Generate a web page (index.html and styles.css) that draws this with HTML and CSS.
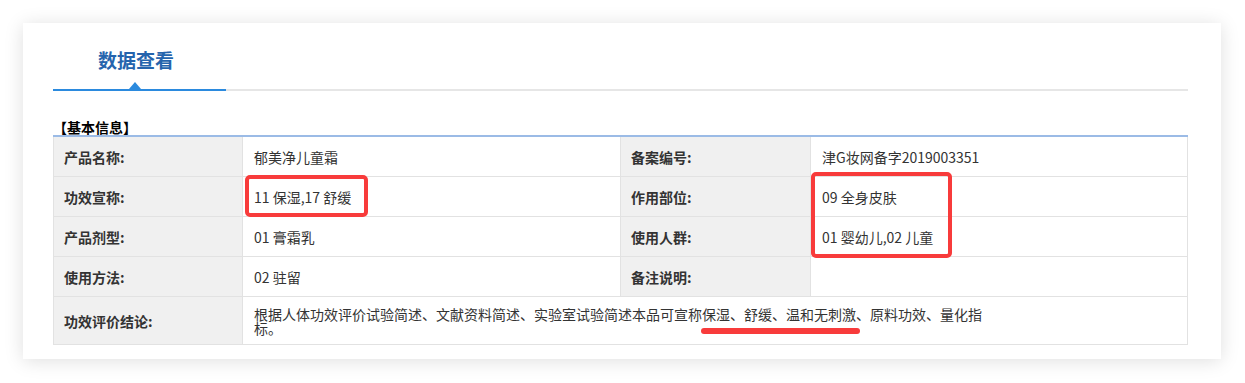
FILE: index.html
```html
<!DOCTYPE html>
<html lang="zh-CN">
<head>
<meta charset="utf-8">
<title>数据查看</title>
<link rel="stylesheet" href="styles.css">
</head>
<body>
<div class="page">
  <div class="card">
    <div class="tabs">
      <div class="tab active">数据查看</div>
      <div class="tab-rest"></div>
    </div>
    <div class="section-title">【基本信息】</div>
    <div class="grid">
      <div class="label">产品名称:</div>
      <div class="value">郁美净儿童霜</div>
      <div class="label">备案编号:</div>
      <div class="value">津G妆网备字2019003351</div>

      <div class="label">功效宣称:</div>
      <div class="value">11 保湿,17 舒缓</div>
      <div class="label">作用部位:</div>
      <div class="value">09 全身皮肤</div>

      <div class="label">产品剂型:</div>
      <div class="value">01 膏霜乳</div>
      <div class="label">使用人群:</div>
      <div class="value">01 婴幼儿,02 儿童</div>

      <div class="label">使用方法:</div>
      <div class="value">02 驻留</div>
      <div class="label">备注说明:</div>
      <div class="value"></div>

      <div class="label">功效评价结论:</div>
      <div class="value wide"><p class="long">根据人体功效评价试验简述、文献资料简述、实验室试验简述本品可宣称保湿、舒缓、温和无刺激、原料功效、量化指标。</p></div>

      <div class="mark mark-claim"></div>
      <div class="mark mark-area"></div>
      <div class="mark-line"></div>
    </div>
  </div>
</div>
</body>
</html>
```

FILE: styles.css
```css
* { box-sizing: border-box; }

html, body {
  margin: 0;
  padding: 0;
  background: #ffffff;
}

body {
  font-family: "Noto Sans CJK SC", "Noto Sans", sans-serif;
  color: #333333;
}

.page {
  padding: 23px 24px 24px 23px;
}

.card {
  background: #ffffff;
  box-shadow: 0 2px 18px rgba(0, 0, 0, 0.13);
  padding: 0 33px 14px 30px;
}

.tabs {
  display: flex;
  align-items: flex-end;
  height: 68px;
}

.tab {
  position: relative;
  width: 173px;
  height: 68px;
  padding: 24px 0 0 45px;
  font-size: 19px;
  line-height: 26px;
  font-weight: bold;
  color: #2564ad;
  border-bottom: 2px solid #2b8ade;
}

.tab.active::after {
  content: "";
  position: absolute;
  left: 76px;
  bottom: 0;
  width: 0;
  height: 0;
  border-left: 6px solid transparent;
  border-right: 6px solid transparent;
  border-bottom: 7px solid #2b8ade;
}

.tab-rest {
  flex: 1;
  height: 2px;
  background: #e6e6e6;
}

.section-title {
  margin-top: 28px;
  font-size: 14px;
  line-height: 16px;
  font-weight: bold;
  color: #000000;
  border-bottom: 2px solid #9bbbe6;
}

.grid {
  position: relative;
  display: grid;
  grid-template-columns: 189px 378px 190px 1fr;
  grid-template-rows: repeat(4, 40px) 48px;
  border-left: 1px solid #e2e2e2;
}

.label,
.value {
  display: flex;
  align-items: center;
  border-right: 1px solid #e2e2e2;
  border-bottom: 1px solid #e2e2e2;
  font-size: 14px;
  line-height: 18px;
  white-space: nowrap;
}

.label {
  background: #f0f0f0;
  padding-left: 10px;
  font-weight: bold;
  color: #333333;
}

.value {
  background: #ffffff;
  padding-left: 11px;
  color: #333333;
}

.wide {
  grid-column: span 3;
  white-space: normal;
}

.long {
  margin: 0;
  max-width: 736px;
  font-size: 14px;
  line-height: 14px;
  padding-top: 1px;
}

.mark {
  position: absolute;
  border: 4px solid #f83b3b;
  border-radius: 5px;
  pointer-events: none;
}

.mark-claim {
  left: 191px;
  top: 38px;
  width: 123px;
  height: 42px;
}

.mark-area {
  left: 757px;
  top: 35px;
  width: 141px;
  height: 86px;
}

.mark-line {
  position: absolute;
  left: 647px;
  top: 191px;
  width: 159px;
  height: 6px;
  border-radius: 3px;
  background: #f83b3b;
}
```
